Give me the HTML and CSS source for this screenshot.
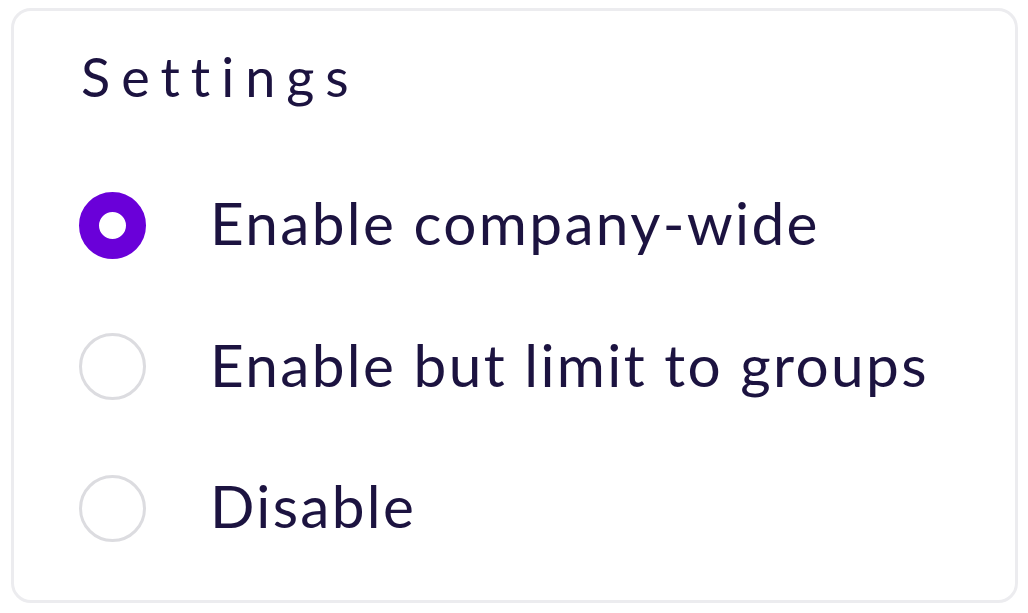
FILE: index.html
```html
<!DOCTYPE html>
<html>
<head>
<meta charset="utf-8">
<link rel="stylesheet" href="styles.css">
</head>
<body>
<div class="card">
  <h1 class="title">Settings</h1>
  <div class="options">
    <label class="option">
      <span class="radio radio-on"></span>
      <span class="label">Enable company-wide</span>
    </label>
    <label class="option">
      <span class="radio"></span>
      <span class="label">Enable but limit to groups</span>
    </label>
    <label class="option">
      <span class="radio"></span>
      <span class="label">Disable</span>
    </label>
  </div>
</div>
</body>
</html>
```
FILE: styles.css
```css
html, body {
  margin: 0;
  padding: 0;
  background: #ffffff;
}
body {
  width: 1028px;
  height: 613px;
  overflow: hidden;
  font-family: Lato, "Noto Sans", sans-serif;
  color: #1c1340;
}
.card {
  box-sizing: border-box;
  margin: 8px 0 0 11px;
  width: 1007px;
  height: 595px;
  border: 3px solid #ececef;
  border-radius: 20px;
  padding: 36px 0 0 67px;
}
.title {
  margin: 0;
  font-size: 54px;
  font-weight: 400;
  line-height: 60px;
  letter-spacing: 11px;
}
.options {
  display: flex;
  flex-direction: column;
  gap: 75.5px;
  margin-top: 85px;
  margin-left: -2px;
}
.option {
  display: flex;
  align-items: center;
  gap: 64px;
  height: 66px;
}
.radio {
  box-sizing: border-box;
  width: 67px;
  height: 67px;
  border-radius: 50%;
  border: 3px solid #dcdce0;
  flex: none;
}
.radio-on {
  border: 20px solid #6a00d9;
  background: #fff;
}
.label {
  font-size: 58.5px;
  line-height: 61px;
  padding-bottom: 5px;
  letter-spacing: 2.35px;
}
```
